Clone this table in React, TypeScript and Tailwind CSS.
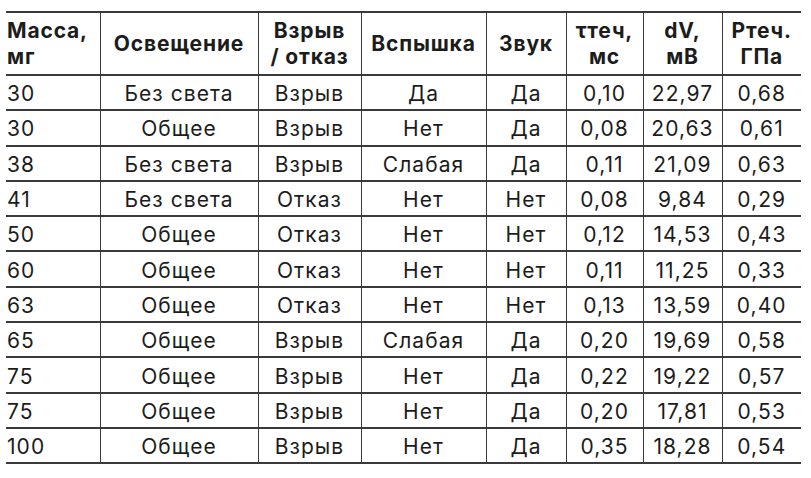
const rows: string[][] = [
  ["30", "Без света", "Взрыв", "Да", "Да", "0,10", "22,97", "0,68"],
  ["30", "Общее", "Взрыв", "Нет", "Да", "0,08", "20,63", "0,61"],
  ["38", "Без света", "Взрыв", "Слабая", "Да", "0,11", "21,09", "0,63"],
  ["41", "Без света", "Отказ", "Нет", "Нет", "0,08", "9,84", "0,29"],
  ["50", "Общее", "Отказ", "Нет", "Нет", "0,12", "14,53", "0,43"],
  ["60", "Общее", "Отказ", "Нет", "Нет", "0,11", "11,25", "0,33"],
  ["63", "Общее", "Отказ", "Нет", "Нет", "0,13", "13,59", "0,40"],
  ["65", "Общее", "Взрыв", "Слабая", "Да", "0,20", "19,69", "0,58"],
  ["75", "Общее", "Взрыв", "Нет", "Да", "0,22", "19,22", "0,57"],
  ["75", "Общее", "Взрыв", "Нет", "Да", "0,20", "17,81", "0,53"],
  ["100", "Общее", "Взрыв", "Нет", "Да", "0,35", "18,28", "0,54"],
];

const widths = [94, 158, 103, 125, 80, 77, 79, 79];

export default function App() {
  return (
    <div className="w-[811px] h-[478px] bg-white pt-[11px] pl-[6px] font-['Inter',sans-serif] text-[#1c1c1c]">
      <table className="border-collapse table-fixed w-[795px]">
        <colgroup>
          {widths.map((w, i) => (
            <col key={i} style={{ width: w }} />
          ))}
        </colgroup>
        <thead>
          <tr className="h-[63px] border-t-2 border-b-2 border-[#3a3a3a] text-[21px] font-bold leading-[26px] tracking-[0.04em]">
            <th className="text-left pl-[1px] font-bold">Масса,<br />мг</th>
            <th className="border-l border-[#3a3a3a] font-bold">Освещение</th>
            <th className="border-l border-[#3a3a3a] font-bold">Взрыв<br />/ отказ</th>
            <th className="border-l border-[#3a3a3a] font-bold">Вспышка</th>
            <th className="border-l border-[#3a3a3a] font-bold">Звук</th>
            <th className="border-l border-[#3a3a3a] font-bold">τтеч,<br />мс</th>
            <th className="border-l border-[#3a3a3a] font-bold">dV,<br />мВ</th>
            <th className="border-l border-[#3a3a3a] font-bold">Pтеч.<br />ГПа</th>
          </tr>
        </thead>
        <tbody>
          {rows.map((r, i) => (
            <tr key={i} className="h-[35.3px] border-b-2 border-[#3a3a3a] text-[21px] font-normal tracking-[0.05em] leading-[26px]">
              {r.map((c, j) => (
                <td
                  key={j}
                  className={j === 0 ? "text-left pl-[1px] pt-[3px]" : "text-center border-l border-[#3a3a3a] pt-[3px]"}
                >
                  {c}
                </td>
              ))}
            </tr>
          ))}
        </tbody>
      </table>
    </div>
  );
}
